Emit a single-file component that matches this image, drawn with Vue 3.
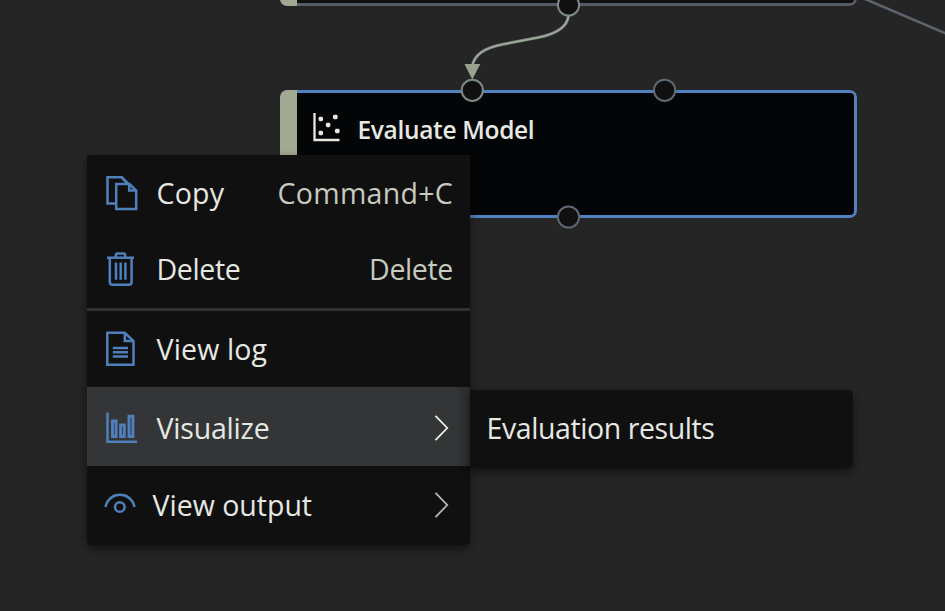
<script setup>
const ports = [
  { x: 568.5, y: 5, linked: true },
  { x: 472.3, y: 90.3, linked: true },
  { x: 664.6, y: 90.3 },
  { x: 568.5, y: 217 },
]
const primary = [
  { id: 'copy', label: 'Copy', shortcut: 'Command+C' },
  { id: 'delete', label: 'Delete', shortcut: 'Delete' },
]
const secondary = [
  { id: 'log', label: 'View log' },
  { id: 'visualize', label: 'Visualize', submenu: true, active: true },
  { id: 'output', label: 'View output', submenu: true },
]
const groups = [primary, secondary]
</script>

<template>
  <main class="canvas">
    <section class="node previous"><div class="accent"></div><div class="body"></div></section>
    <section class="node selected">
      <div class="accent"></div>
      <div class="body">
        <svg class="scatter" width="28" height="30" viewBox="0 0 28 30">
          <path d="M1.5 0V27H26.5" fill="none" stroke="#e6e8e2" stroke-width="2.3" />
          <g fill="#e6e8e2">
            <rect x="5.6" y="3.8" width="4.4" height="4.4" rx="1.4" />
            <rect x="20" y="1.8" width="4.6" height="4.4" rx="1.4" />
            <rect x="12.9" y="9.8" width="4.4" height="4.4" rx="1.4" />
            <rect x="5.6" y="17.8" width="4.4" height="4.4" rx="1.4" />
            <rect x="22" y="15.8" width="4.6" height="4.4" rx="1.4" />
          </g>
        </svg>
        <h1>Evaluate Model</h1>
      </div>
    </section>

    <svg class="edges" width="945" height="611" viewBox="0 0 945 611">
      <path d="M865 -1L946 33.5" fill="none" stroke="#5b636d" stroke-width="2.6" />
      <path d="M568.5 16C567 28 556 34 538 37.5L502 44.5C484 48 474 55 472.4 66" fill="none" stroke="#747f7e" stroke-width="3" />
      <path d="M568.5 16C567 28 556 34 538 37.5L502 44.5C484 48 474 55 472.4 66" fill="none" stroke="#a1ac98" stroke-width="1.7" />
      <path d="M464.5 64H480.3L472.3 79.5Z" fill="#98a38f" />
      <circle
        v-for="(p, i) in ports" :key="i" :cx="p.x" :cy="p.y" r="10.6"
        fill="#101010" :stroke="p.linked ? '#7f8988' : '#5f6771'" stroke-width="2"
      />
    </svg>

    <nav class="menu">
      <div v-for="(group, g) in groups" :key="g" class="group">
        <div v-for="item in group" :key="item.id" class="item" :class="[item.id, { active: item.active }]">
          <svg class="icon" width="36" height="36" viewBox="0 0 36 36">
            <g v-if="item.id === 'copy'">
              <path d="M10.5 28.5H2.5V2.2H16.5L21 7" />
              <path d="M11.2 9H24.5L31.2 15.5V34H11.2Z" />
              <path d="M16.5 2.2L23 8.5M24.2 9V15.5H31" />
            </g>
            <g v-else-if="item.id === 'delete'">
              <path d="M2 6.7H29" />
              <path d="M10.8 6V4.2Q10.8 2.5 12.5 2.5H18.5Q20.2 2.5 20.2 4.2V6" />
              <path d="M4.8 7V31Q4.8 33.8 7.6 33.8H23.8Q26.6 33.8 26.6 31V7" />
              <path d="M11 11.5V28.8M15.7 11.5V28.8M20.4 11.5V28.8" />
            </g>
            <g v-else-if="item.id === 'log'">
              <path d="M2.3 1.8H19.8L28.5 10V33.8H2.3Z" />
              <path d="M19.8 1.8V10H28.5" />
              <path d="M7.8 17H23M7.8 21.2H23M7.8 25.4H23" />
            </g>
            <g v-else-if="item.id === 'visualize'">
              <path d="M2.5 2.5V31.8H32" />
              <path class="bars" d="M7.5 11H11.1V26.5H7.5ZM15.6 15H19.3V26.5H15.6ZM24 6.1H27.9V26.5H24Z" />
            </g>
            <g v-else>
              <path d="M1.5 20C4.4 3.8 27.6 3.8 30.5 20" />
              <circle cx="15.8" cy="20" r="4.8" />
            </g>
          </svg>
          <span class="label">{{ item.label }}</span>
          <span v-if="item.shortcut" class="shortcut">{{ item.shortcut }}</span>
          <svg v-if="item.submenu" class="chevron" width="16" height="28" viewBox="0 0 16 28">
            <path d="M1.5 1.8L13.2 14L1.5 26.2" />
          </svg>
        </div>
      </div>
    </nav>
    <aside class="submenu"><span>Evaluation results</span></aside>
  </main>
</template>

<style>
body { margin: 0; background: #252525; }
</style>

<style scoped>
.canvas {
  position: relative;
  width: 945px;
  height: 611px;
  overflow: hidden;
  background: #252525;
  font-family: "Open Sans", "Noto Sans", sans-serif;
  color: #e6e8e2;
}
.node {
  position: absolute;
  left: 280px;
  width: 577px;
  display: flex;
  border-radius: 7px;
  overflow: hidden;
}
.previous { top: -80px; height: 86px; }
.selected { top: 90px; height: 128px; }
.accent { width: 17px; background: #a1a993; }
.body {
  flex: 1;
  box-sizing: border-box;
  display: flex;
  align-items: flex-start;
  border: 3px solid #5080bf;
  border-left: 0;
  border-radius: 0 7px 7px 0;
  background: #040507;
}
.previous .body { border-color: #555c65; background: #101010; }
.scatter { margin: 20px 0 0 16px; }
h1 {
  margin: 20px 0 0 16.5px;
  font-size: 24.5px;
  line-height: 34px;
  font-weight: 600;
  letter-spacing: -0.33px;
  white-space: nowrap;
}
.edges { position: absolute; inset: 0; }
.menu {
  position: absolute;
  left: 87px;
  top: 155px;
  width: 383px;
  height: 390px;
  background: #101010;
  border-radius: 0 0 5px 5px;
  box-shadow: 0 4px 10px rgba(0, 0, 0, 0.5);
  font-size: 28.5px;
}
.group + .group { border-top: 3px solid #303031; }
.item {
  height: 77px;
  box-sizing: border-box;
  padding: 0 17px 0 18px;
  display: flex;
  align-items: center;
}
.group:first-child .item { padding-bottom: 2px; }
.group:first-child .item:last-child { height: 76px; }
.log { height: 76px; }
.active { height: 79px; padding-top: 2px; background: linear-gradient(90deg, #343537 96%, #2b2c2d); }
.icon { fill: none; stroke: #5080bb; stroke-width: 2.5; flex: none; }
.bars { stroke-width: 2.9; }
.label { margin-left: 15.5px; }
.copy .label { letter-spacing: 0.2px; }
.delete .label, .delete .shortcut { letter-spacing: -0.35px; }
.log .label { letter-spacing: 0.15px; }
.visualize .label { letter-spacing: -0.2px; }
.output .label { margin-left: 12.5px; }
.output .icon { margin-left: -1px; }
.label, .shortcut, .submenu span { line-height: 40px; white-space: nowrap; }
.shortcut { margin-left: auto; color: #c6cabf; letter-spacing: 0.28px; }
.chevron { margin-left: auto; margin-right: 3px; fill: none; stroke: #b6bbb0; stroke-width: 1.8; }
.active .chevron { stroke: #eceee9; }
.submenu {
  position: absolute;
  left: 470px;
  top: 390px;
  width: 383px;
  height: 78px;
  box-sizing: border-box;
  padding: 0 0 2px 16.5px;
  display: flex;
  align-items: center;
  background: #101010;
  border-radius: 0 5px 5px 0;
  box-shadow: 0 4px 10px rgba(0, 0, 0, 0.5);
  font-size: 28.5px;
  letter-spacing: -0.42px;
}
</style>
